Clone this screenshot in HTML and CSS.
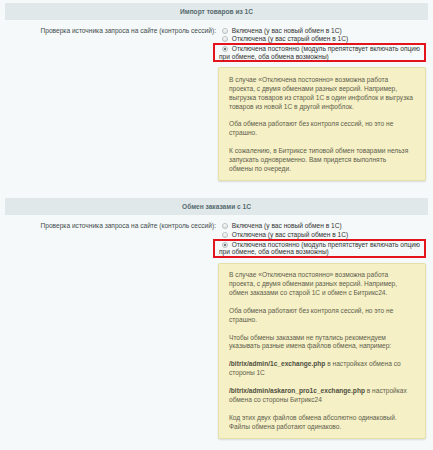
FILE: index.html
```html
<!DOCTYPE html>
<html lang="ru">
<head>
  <meta charset="UTF-8" />
  <title>Настройки обмена с 1С</title>
  <link rel="stylesheet" href="styles.css">
</head>
<body>

  <div class="heading">Импорт товаров из 1С</div>
  <div class="row">
    <div class="label">Проверка источника запроса на сайте (контроль сессий):</div>
    <div class="field">
      <label class="opt"><input type="radio" name="import_check"> Включена (у вас новый обмен в 1С)</label>
      <label class="opt"><input type="radio" name="import_check"> Отключена (у вас старый обмен в 1С)</label>
      <label class="opt marked"><input type="radio" name="import_check" checked> Отключена постоянно (модуль препятствует включать опцию при обмене, оба обмена возможны)</label>

      <div class="hint">
        <p>В случае «Отключена постоянно» возможна работа<br>проекта, с двумя обменами разных версий. Например,<br>выгрузка товаров из старой 1С в один инфоблок и выгрузка<br>товаров из новой 1С в другой инфоблок.</p>
        <p>Оба обмена работают без контроля сессий, но это не<br>страшно.</p>
        <p>К сожалению, в Битриксе типовой обмен товарами нельзя<br>запускать одновременно. Вам придется выполнять<br>обмены по очереди.</p>
      </div>
    </div>
  </div>

  <div class="heading">Обмен заказами с 1С</div>
  <div class="row">
    <div class="label">Проверка источника запроса на сайте (контроль сессий):</div>
    <div class="field">
      <label class="opt"><input type="radio" name="sale_check"> Включена (у вас новый обмен в 1С)</label>
      <label class="opt"><input type="radio" name="sale_check"> Отключена (у вас старый обмен в 1С)</label>
      <label class="opt marked"><input type="radio" name="sale_check" checked> Отключена постоянно (модуль препятствует включать опцию при обмене, оба обмена возможны)</label>

      <div class="hint">
        <p>В случае «Отключена постоянно» возможна работа<br>проекта, с двумя обменами разных версий. Например,<br>обмен заказами со старой 1С и обмен с Битрикс24.</p>
        <p>Оба обмена работают без контроля сессий, но это не<br>страшно.</p>
        <p>Чтобы обмены заказами не путались рекомендуем<br>указывать разные имена файлов обмена, например:</p>
        <p><b>/bitrix/admin/1c_exchange.php</b> в настройках обмена со<br>стороны 1С</p>
        <p><b>/bitrix/admin/askaron_pro1c_exchange.php</b> в настройках<br>обмена со стороны Битрикс24</p>
        <p>Код этих двух файлов обмена абсолютно одинаковый.<br>Файлы обмена работают одинаково.</p>
      </div>
    </div>
  </div>

</body>
</html>
```

FILE: styles.css
```css
body {
  margin: 0;
  padding: 3px 5px 0;
  background: #f5f9f9;
  font-family: "Liberation Sans", Arial, sans-serif;
  font-size: 6.6px;
  line-height: 8.9px;
  color: #333;
}
.heading {
  height: 17px;
  line-height: 17px;
  background: #e0e8ea;
  text-align: center;
  font-weight: bold;
  color: #566a6e;
}
.row {
  display: grid;
  grid-template-columns: 211px 1fr;
  column-gap: 3px;
  padding: 6.5px 0 17px;
}
.label {
  text-align: right;
  color: #3f4b4d;
}
.field {
  padding-right: 2px;
}
.opt {
  display: block;
  color: #333;
}
.opt input {
  appearance: none;
  width: 6px;
  height: 6px;
  margin: 0 2.5px 0 2.5px;
  vertical-align: -1px;
  border: 1px solid #b9c0c1;
  border-radius: 50%;
  background: linear-gradient(#fdfdfd, #dde2e3);
  box-sizing: border-box;
}
.opt input:checked {
  background: radial-gradient(circle, #6f7a7c 0 1px, #e9ecec 1.4px);
}
.opt.marked {
  margin: -1px 0 0 -6px;
  border: 2px solid #e3141c;
  padding: 0 2px 0 4px;
  line-height: 7.5px;
}
.hint {
  margin: 5px 0 0 -1px;
  padding: 7.6px 8px 6.5px 10px;
  background: #f5f0c5;
  border: 1px solid #e5dfa8;
  border-radius: 2px;
  box-shadow: 0 1px 2px rgba(0, 0, 0, 0.12);
  color: #5f5e4e;
  white-space: nowrap;
}
.hint p {
  margin: 0 0 8.9px;
}
.hint p:last-child {
  margin-bottom: 0;
}
.hint b {
  color: #4f4f42;
}
```
